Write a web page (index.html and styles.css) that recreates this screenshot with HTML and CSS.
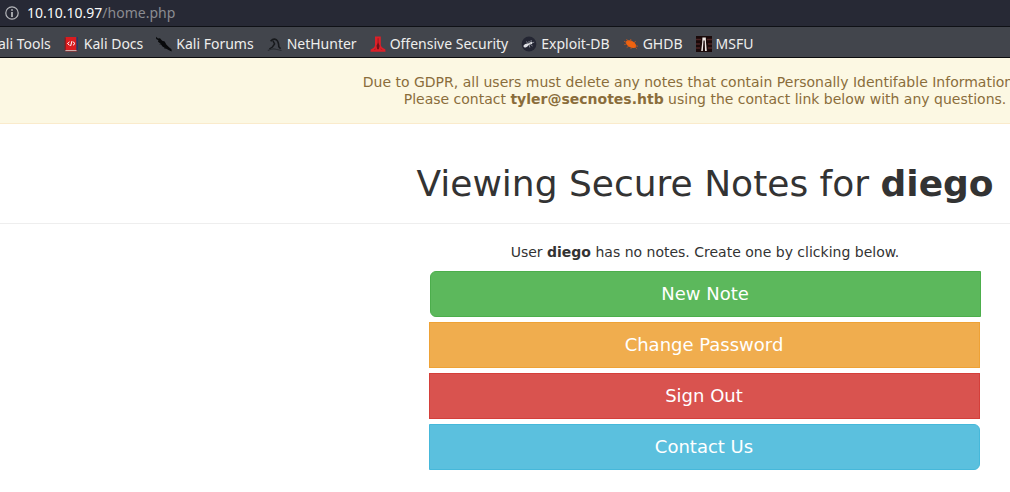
FILE: index.html
```html
<!DOCTYPE html>
<html lang="en">
<head>
<meta charset="utf-8">
<title>Secure Notes</title>
<link rel="stylesheet" href="styles.css">
</head>
<body>
<header class="browser">
  <div class="address">
    <svg class="info" viewBox="0 0 14 14" aria-hidden="true"><circle cx="7" cy="7" r="6.2" fill="none" stroke="#b5b6ba" stroke-width="1.2"/><path d="M6.2 3.2h1.6v1.6H6.2zM6.2 6h1.6v5H6.2z" fill="#c4c5c8"/></svg>
    <span class="url"><span class="host">10.10.10.97</span>/home.php</span>
  </div>
  <nav class="bookmarks">
    <a class="bookmark bookmark-first" href="#">ali Tools</a>
    <a class="bookmark" href="#"><svg class="icon" viewBox="0 0 16 16" aria-hidden="true"><path d="M1.5 1h11v13h-11z" fill="#d91c20"/><path d="M1.2 1.5v13" stroke="#8d1517"/><path d="M12.5 1h1.4v13h-1.4z" fill="#25366b"/><path d="M1.5 14h11v1.2h-11z" fill="#e6d9d6"/><path d="M1.5 15.2h12" stroke="#91211f" stroke-width=".8"/><path d="M5.5 5.8 3.5 7.5l2 1.8M8 5 6.6 10M9 5.8l2 1.7-2 1.8" fill="none" stroke="#fff" stroke-width="1"/></svg>Kali Docs</a>
    <a class="bookmark" href="#"><svg class="icon" viewBox="0 0 16 16" aria-hidden="true"><path d="M0 .8 2 2.4l2-.1 2.2 2.4 2.5.8 1.6 3 2.5 2.5 2.7 2.3.2 2.2-2.7-1.3-3.2-1.8-3.3-2-2.4-3.2L2 5.8l.4-1.5L.2 3z" fill="#08090b"/><path d="m9 11-1 1 2 .2M5 8l-1.4.4" stroke="#17191c" stroke-width=".8"/></svg>Kali Forums</a>
    <a class="bookmark" href="#"><svg class="icon" viewBox="0 0 16 16" aria-hidden="true"><path d="M3.6 5.3Q6.5 2 9.2 3.7q2.5 1.8 2.6 7l1.8 2" fill="none" stroke="#17191c" stroke-width="1.6"/><path d="M6 4.8 7.6 8 5.4 11l-3 2" fill="none" stroke="#17191c" stroke-width="1.5"/><path d="M.8 14.4q5-2.3 8.2-1.1l5.5 1.2" fill="none" stroke="#292c31" stroke-width="1.1"/></svg>NetHunter</a>
    <a class="bookmark" href="#"><svg class="icon" viewBox="0 0 16 16" aria-hidden="true"><path d="M5 .5h5.8v8.2q0 2.7 4.5 4.6l.2 2.4H.5l.2-2.2Q5 11.6 5 8.7z" fill="#dc2028"/><path d="M8.1 2.2v8" stroke="#9a161d"/><path d="m8.1 6.5 1.5 3.2-.7 3.6H7.2l-.7-3.6z" fill="#6d131a"/><path d="m4 13.8 2-1M12.4 13.8l-2-1" stroke="#a81b23" stroke-width=".8"/></svg>Offensive Security</a>
    <a class="bookmark" href="#"><svg class="icon" viewBox="0 0 16 16" aria-hidden="true"><circle cx="8" cy="8" r="7.4" fill="#242633"/><ellipse cx="5" cy="9.5" rx="2.7" ry="1.6" transform="rotate(-25 5 9.5)" fill="#dedfe4"/><ellipse cx="8" cy="8" rx="1.6" ry=".9" transform="rotate(-25 8 8)" fill="#eee"/><circle cx="10.2" cy="7" r="1.1" fill="#fff"/><path d="m7 8-1.5-2.5M8.2 7.8 8 5M10 7l.2-3M11 6.8l2.2-.6M8 8.5l.8 3M9 8l2.6 2" fill="none" stroke="#aeb0ba" stroke-width=".7"/></svg>Exploit-DB</a>
    <a class="bookmark" href="#"><svg class="icon" viewBox="0 0 16 16" aria-hidden="true"><ellipse cx="8" cy="8.2" rx="5.6" ry="3.2" transform="rotate(28 8 8.2)" fill="#ee6310"/><path d="M3.5 6.5 1 5.2M5 5.5 3.5 3M8 6l-.3-3M11 7l1.7-2M3.5 8 1.2 8.6M6 10l-2.3 1.6M9 11l-1.3 2M12.5 10l2.5.2M12 11l2 1.8" stroke="#c9571c" stroke-width=".8"/></svg>GHDB</a>
    <a class="bookmark" href="#"><svg class="icon" viewBox="0 0 16 16" aria-hidden="true"><path d="M0 0h16v16H0z" fill="#190909"/><path d="M0 3.5h5M11 3.5h5M0 8h4M12 8h4M0 12h4M12 12h4" stroke="#4c2323" stroke-width="1.3"/><path d="M6.4 1.5h3.4l.2 5 .8 8.5H9L8.7 4.5H7.5L6.8 15H5.2l1-8.5z" fill="#eee8e5"/></svg>MSFU</a>
  </nav>
</header>
<main class="page">
  <div class="notice">
    <div class="notice-main">Due to GDPR, all users must delete any notes that contain Personally Identifable Information</div>
    <div>Please contact <strong>tyler@secnotes.htb</strong> using the contact link below with any questions.</div>
  </div>
  <h1 class="title">Viewing Secure Notes for <b>diego</b></h1>
  <section class="notes">
    <p class="empty">User <b>diego</b> has no notes. Create one by clicking below.</p>
    <div class="actions">
      <a class="btn new" href="#">New Note</a>
      <a class="btn password" href="#">Change Password</a>
      <a class="btn signout" href="#">Sign Out</a>
      <a class="btn contact" href="#">Contact Us</a>
    </div>
  </section>
</main>
</body>
</html>
```
FILE: styles.css
```css
* { box-sizing: border-box; }
body {
  margin: 0;
  overflow: hidden;
  background: #fff;
  color: #333;
  font: 14px/17px "DejaVu Sans", sans-serif;
}
.browser {
  font: 14px/20px "Noto Sans", sans-serif;
  border-bottom: 1px solid #0c0c0d;
}
.address {
  display: flex;
  align-items: center;
  gap: 8px;
  height: 27px;
  padding-left: 5px;
  background: #272935;
  border-bottom: 1px solid #0f1116;
}
.info { width: 14px; height: 14px; }
.url { color: #8b8c91; }
.host { color: #f9f9fa; }
.bookmarks {
  display: flex;
  align-items: center;
  gap: 13px;
  height: 30px;
  padding-top: 4px;
  background: #42454c;
  white-space: nowrap;
}
.bookmark {
  display: flex;
  align-items: center;
  gap: 4px;
  color: #eeeeec;
  text-decoration: none;
}
.bookmark-first { margin-left: -2px; }
.icon { width: 16px; height: 16px; }
.page {
  width: calc(100% + 400px);
  text-align: center;
}
.notice {
  padding: 16px 0 15px;
  background: #fcf8e3;
  border-bottom: 1px solid #faebcc;
  color: #8a6d3b;
  white-space: nowrap;
}
.notice-main { padding-right: 34px; }
.title {
  margin: 40px 0 20px;
  padding-bottom: 19px;
  border-bottom: 1px solid #eee;
  font-size: 36px;
  line-height: 40px;
  font-weight: 400;
}
.empty { margin: 0 0 10px; }
.actions {
  display: grid;
  gap: 5px;
  width: 551px;
  margin: 0 auto;
}
.btn {
  padding: 10px 16px;
  border: 1px solid;
  color: #fff;
  font-size: 18px;
  line-height: 24px;
  text-decoration: none;
}
.btn + .btn { margin: 0 1px 0 -1px; }
.new { background: #5cb85c; border-color: #4cae4c; border-radius: 6px 0 0 6px; }
.password { background: #f0ad4e; border-color: #eea236; }
.signout { background: #d9534f; border-color: #d43f3a; }
.contact { background: #5bc0de; border-color: #46b8da; border-radius: 0 6px 6px 0; }
```
